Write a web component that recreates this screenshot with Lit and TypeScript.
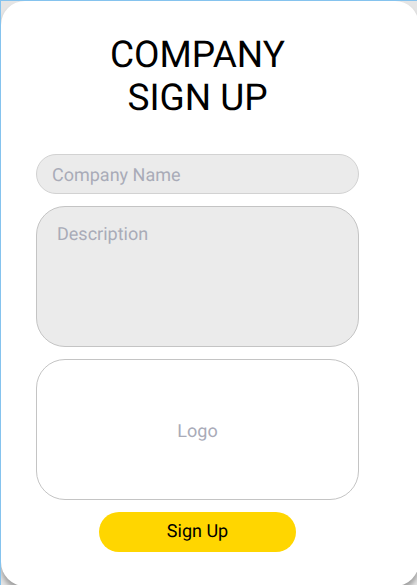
import { LitElement, html, css } from "lit";
import { customElement } from "lit/decorators.js";

@customElement("app-root")
export class AppRoot extends LitElement {
  static styles = css`
    :host {
      display: block;
      font-family: Roboto, "Liberation Sans", sans-serif;
      font-size: 18px;
      line-height: 22px;
      color: #000;
      text-rendering: geometricPrecision;
    }
    .frame {
      display: flex;
      flex-direction: column;
      box-sizing: border-box;
      min-height: 100vh;
      overflow: hidden;
      border: solid #85c3ee;
      border-width: 1px 0 0 1px;
      background: #e5e5e5;
    }
    .card {
      flex: 1;
      box-sizing: border-box;
      margin: 0 -2px -1px 0;
      padding: 33px 60px 32px 35px;
      border-radius: 24px;
      background: #fff;
      box-shadow: 0 5px 5px rgba(0, 0, 0, 0.3);
    }
    h1 {
      margin: 0 0 34px;
      font-size: 37px;
      line-height: 43px;
      font-weight: 400;
      text-align: center;
    }
    form {
      display: flex;
      flex-direction: column;
      gap: 12px;
    }
    .field {
      box-sizing: border-box;
      display: block;
      width: 100%;
      margin: 0;
      border: 1px solid #c4c4c4;
      border-radius: 29px;
      background: #ebebeb;
      font: inherit;
      text-rendering: inherit;
      color: #000;
    }
    .field::placeholder {
      color: #a9abb8;
      opacity: 1;
    }
    .name {
      height: 40px;
      padding: 2px 15px 0;
      border-color: #d2d2d2;
      border-radius: 20px;
    }
    .area {
      height: 141px;
      padding: 17px 20px;
      resize: none;
    }
    .logo {
      display: flex;
      align-items: center;
      justify-content: center;
      height: 141px;
      padding-top: 4px;
      background: #fff;
      color: #a9abb8;
      cursor: pointer;
    }
    .file {
      width: 1px;
      height: 1px;
      margin: 0 -1px 0 0;
      opacity: 0;
    }
    .submit {
      align-self: center;
      width: 61%;
      height: 40px;
      padding: 0;
      border: 0;
      border-radius: 20px;
      background: #ffd600;
      font: inherit;
      text-rendering: inherit;
      color: #000;
      cursor: pointer;
    }
  `;

  render() {
    return html`
      <main class="frame">
        <section class="card">
          <h1>COMPANY<br />SIGN UP</h1>
          <form @submit=${(e: Event) => e.preventDefault()}>
            <input class="field name" type="text" name="company" placeholder="Company Name" aria-label="Company Name" />
            <textarea class="field area" name="description" placeholder="Description" aria-label="Description"></textarea>
            <label class="field logo" for="logo">
              <input class="file" id="logo" type="file" name="logo" accept="image/*" />
              Logo
            </label>
            <button class="submit" type="submit">Sign Up</button>
          </form>
        </section>
      </main>
    `;
  }
}
